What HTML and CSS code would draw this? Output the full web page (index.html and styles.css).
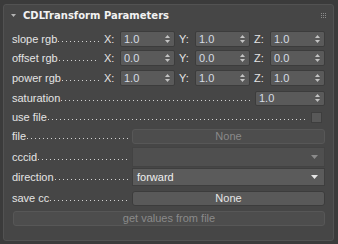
FILE: index.html
```html
<!DOCTYPE html>
<html>
<head>
<meta charset="utf-8">
<link rel="stylesheet" href="styles.css">
</head>
<body>
<div class="panel">
  <div class="header">
    <svg class="tri" width="5" height="3" viewBox="0 0 5 3"><polygon points="0,0 5,0 2.5,3" fill="#b4b4b4"/></svg>
    <span class="title">CDLTransform Parameters</span>
    <svg class="grip" width="5" height="5" viewBox="0 0 5 5" fill="#8c8c8c">
      <rect x="0" y="0" width="1" height="1"/><rect x="2" y="0" width="1" height="1"/><rect x="4" y="0" width="1" height="1"/>
      <rect x="0" y="2" width="1" height="1"/><rect x="2" y="2" width="1" height="1"/><rect x="4" y="2" width="1" height="1"/>
      <rect x="0" y="4" width="1" height="1"/><rect x="2" y="4" width="1" height="1"/><rect x="4" y="4" width="1" height="1"/>
    </svg>
  </div>
  <div class="body">
    <div class="row r-slope">
      <span class="lbl">slope rgb</span><span class="dots"></span>
      <span class="axis ax-x">X:</span><div class="spin"><span>1.0</span><svg width="5" height="8" viewBox="0 0 5 8"><polygon points="0,3 2.5,0 5,3" /><polygon points="0,5 5,5 2.5,8"/></svg></div>
      <span class="axis">Y:</span><div class="spin"><span>1.0</span><svg width="5" height="8" viewBox="0 0 5 8"><polygon points="0,3 2.5,0 5,3" /><polygon points="0,5 5,5 2.5,8"/></svg></div>
      <span class="axis">Z:</span><div class="spin"><span>1.0</span><svg width="5" height="8" viewBox="0 0 5 8"><polygon points="0,3 2.5,0 5,3" /><polygon points="0,5 5,5 2.5,8"/></svg></div>
    </div>
    <div class="row r-offset">
      <span class="lbl">offset rgb</span><span class="dots"></span>
      <span class="axis ax-x">X:</span><div class="spin"><span>0.0</span><svg width="5" height="8" viewBox="0 0 5 8"><polygon points="0,3 2.5,0 5,3" /><polygon points="0,5 5,5 2.5,8"/></svg></div>
      <span class="axis">Y:</span><div class="spin"><span>0.0</span><svg width="5" height="8" viewBox="0 0 5 8"><polygon points="0,3 2.5,0 5,3" /><polygon points="0,5 5,5 2.5,8"/></svg></div>
      <span class="axis">Z:</span><div class="spin"><span>0.0</span><svg width="5" height="8" viewBox="0 0 5 8"><polygon points="0,3 2.5,0 5,3" /><polygon points="0,5 5,5 2.5,8"/></svg></div>
    </div>
    <div class="row r-power">
      <span class="lbl">power rgb</span><span class="dots"></span>
      <span class="axis ax-x">X:</span><div class="spin"><span>1.0</span><svg width="5" height="8" viewBox="0 0 5 8"><polygon points="0,3 2.5,0 5,3" /><polygon points="0,5 5,5 2.5,8"/></svg></div>
      <span class="axis">Y:</span><div class="spin"><span>1.0</span><svg width="5" height="8" viewBox="0 0 5 8"><polygon points="0,3 2.5,0 5,3" /><polygon points="0,5 5,5 2.5,8"/></svg></div>
      <span class="axis">Z:</span><div class="spin"><span>1.0</span><svg width="5" height="8" viewBox="0 0 5 8"><polygon points="0,3 2.5,0 5,3" /><polygon points="0,5 5,5 2.5,8"/></svg></div>
    </div>
    <div class="row r-sat">
      <span class="lbl">saturation</span><span class="dots"></span>
      <div class="spin spin-wide"><span>1.0</span><svg width="5" height="8" viewBox="0 0 5 8"><polygon points="0,3 2.5,0 5,3" /><polygon points="0,5 5,5 2.5,8"/></svg></div>
    </div>
    <div class="row r-use">
      <span class="lbl">use file</span><span class="dots"></span>
      <div class="check"></div>
    </div>
    <div class="row r-file">
      <span class="lbl">file</span><span class="dots"></span>
      <div class="btn disabled">None</div>
    </div>
    <div class="row r-cccid">
      <span class="lbl">cccid</span><span class="dots"></span>
      <div class="combo disabled"><span></span><svg width="7" height="4" viewBox="0 0 7 4"><polygon points="0,0 7,0 3.5,4"/></svg></div>
    </div>
    <div class="row r-dir">
      <span class="lbl">direction</span><span class="dots"></span>
      <div class="combo"><span>forward</span><svg width="7" height="4" viewBox="0 0 7 4"><polygon points="0,0 7,0 3.5,4"/></svg></div>
    </div>
    <div class="row r-save">
      <span class="lbl">save cc</span><span class="dots"></span>
      <div class="btn">None</div>
    </div>
    <div class="row r-get">
      <div class="btn disabled full">get values from file</div>
    </div>
  </div>
</div>
</body>
</html>
```
FILE: styles.css
```css
html, body {
  margin: 0;
  padding: 0;
}
body {
  width: 338px;
  height: 244px;
  background: #3b3b3b;
  font-family: "Liberation Sans", Arial, sans-serif;
  font-size: 11px;
  color: #e4e4e4;
  overflow: hidden;
}
.panel {
  box-sizing: border-box;
  margin: 4px 0 0 3px;
  width: 331px;
  height: 237px;
  background: #464646;
  border: 1px solid #525252;
  border-radius: 3px;
}
.header {
  height: 26px;
  display: flex;
  align-items: center;
  padding: 0 7px 6px 7px;
  box-sizing: border-box;
}
.tri {
  margin-right: 7px;
  margin-top: 1px;
}
.title {
  font-family: "DejaVu Sans", sans-serif;
  font-weight: bold;
  font-size: 10px;
  color: #f2f2f2;
  flex: 1;
}
.grip {
  margin-top: 1px;
}
.body {
  padding: 0 8px;
  display: flex;
  flex-direction: column;
}
.row {
  display: flex;
  align-items: center;
  height: 16px;
}
.r-offset { margin-top: 3px; }
.r-power { margin-top: 4px; }
.r-sat { margin-top: 4px; }
.r-use { margin-top: 3px; }
.r-file { margin-top: 3px; }
.r-cccid { margin-top: 3px; height: 20px; }
.r-dir { margin-top: 1px; height: 18px; }
.r-save { margin-top: 4px; }
.r-get { margin-top: 4px; }
.lbl {
  white-space: nowrap;
  flex: none;
}
.dots {
  flex: 1;
  align-self: center;
  height: 1px;
  margin: 4px 4px 0 1px;
  background-image: linear-gradient(90deg, #d2d2d2 1px, transparent 1px);
  background-size: 4px 1px;
  background-repeat: repeat-x;
}
.axis {
  flex: none;
  width: 20px;
  padding-left: 4px;
  box-sizing: border-box;
}
.ax-x { width: 17px; padding-left: 1px; }
.spin {
  flex: none;
  box-sizing: border-box;
  width: 55px;
  height: 16px;
  background: #5a5a5a;
  border: 1px solid #3c3c3c;
  border-radius: 2px;
  display: flex;
  align-items: center;
  padding: 0 4px 0 3px;
  color: #d6dce4;
}
.spin span { flex: 1; }
.spin svg { fill: #c4c4c4; }
.spin-wide { width: 70px; height: 15px; }
.check {
  width: 11px;
  height: 11px;
  box-sizing: border-box;
  background: #585858;
  border: 1px solid #3e3e3e;
  margin-right: 3px;
}
.btn {
  flex: none;
  box-sizing: border-box;
  width: 193px;
  height: 15px;
  border-radius: 3px;
  background: #595959;
  border: 1px solid #3c3c3c;
  display: flex;
  align-items: center;
  justify-content: center;
  color: #e6e6e6;
}
.btn.disabled {
  background: #4d4d4d;
  border-color: #575757;
  color: #8a8a8a;
}
.btn.full {
  width: auto;
  flex: 1;
  margin-left: 1px;
}
.combo {
  flex: none;
  box-sizing: border-box;
  width: 193px;
  height: 100%;
  background: #5b5b5b;
  border: 1px solid #3e3e3e;
  display: flex;
  align-items: center;
  padding: 0 6px 0 4px;
  color: #efefef;
}
.combo span { flex: 1; }
.combo svg { fill: #e6e6e6; }
.combo.disabled {
  background: #4f4f4f;
  border-color: #434343;
}
.combo.disabled svg { fill: #8a8a8a; }
```
